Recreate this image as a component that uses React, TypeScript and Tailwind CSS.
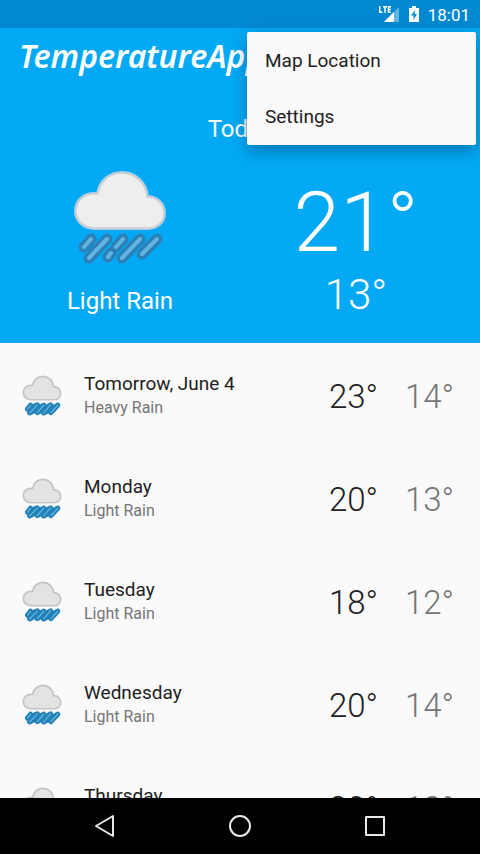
import React from "react";

type Day = { day: string; condition: string; high: number; low: number };

const days: Day[] = [
  { day: "Tomorrow, June 4", condition: "Heavy Rain", high: 23, low: 14 },
  { day: "Monday", condition: "Light Rain", high: 20, low: 13 },
  { day: "Tuesday", condition: "Light Rain", high: 18, low: 12 },
  { day: "Wednesday", condition: "Light Rain", high: 20, low: 14 },
  { day: "Thursday", condition: "Light Rain", high: 20, low: 13 },
];

const cloudPath =
  "M22 58 C10 58 3 50 3 41 C3 31 11 24 21 24 L25 24 C27 11 37 3 49 3 C62 3 73 13 74 27 C84 27 91 34 91 43 C91 52 84 58 75 58 Z";

function LargeRainIcon() {
  return (
    <svg viewBox="0 0 94 96" className="h-24 w-[94px]" fill="none" aria-hidden="true">
      <path d={cloudPath} fill="#eeeeee" stroke="#a9cde6" strokeWidth="4" />
      <path d={cloudPath} fill="#eeeeee" stroke="#cfcfd2" strokeWidth="1.5" />
      <g strokeLinecap="round">
        <path
          d="M18 69l-7 8M34 69L16 88M50 69l-7 8M38 83l-3 4M67 69L49 88M84 69L69 84"
          stroke="#2b80b8"
          strokeWidth="11"
        />
        <path
          d="M18 69l-7 8M34 69L16 88M50 69l-7 8M38 83l-3 4M67 69L49 88M84 69L69 84"
          stroke="#63b3e0"
          strokeWidth="4"
        />
      </g>
    </svg>
  );
}

function SmallRainIcon() {
  return (
    <svg viewBox="0 0 94 96" className="-mt-0.5 h-[41px] w-10 shrink-0" fill="none" aria-hidden="true">
      <path d={cloudPath} fill="#e3e3e3" stroke="#c4c4c4" strokeWidth="4" />
      <g strokeLinecap="round" strokeLinejoin="round">
        <path
          d="M20 71L13 80L36 70L18 89L51 71L36 88L67 70L51 89L84 71L68 88"
          stroke="#2481b8"
          strokeWidth="12"
        />
        <path
          d="M20 71L13 80M36 70L18 89M51 71L36 88M67 70L51 89M84 71L68 88"
          stroke="#5fb4dd"
          strokeWidth="3"
        />
      </g>
    </svg>
  );
}

function StatusBar() {
  return (
    <div className="flex h-7 shrink-0 items-center justify-end bg-[#0288d1] pr-[10px] text-white">
      <svg viewBox="0 0 22 18" className="mr-2 h-[18px] w-[22px]" aria-hidden="true">
        <path d="M21 2v15H6z" fill="#5fb3e2" />
        <path d="M16 7v10H6z" fill="#fff" />
        <path
          d="M1.8 1v6.2h2.7M5 1.7h4M7 1.7v6M13 1.7h-2.500V7.200H13M10.500 4.400h2.200"
          fill="none"
          stroke="#fff"
          strokeWidth="1.5"
        />
      </svg>
      <svg viewBox="0 0 12 18" className="mr-2 h-[18px] w-3" aria-hidden="true">
        <path d="M4 1h4v2h3v14H1V3h3z" fill="#fff" />
        <path d="M7 5l-4 5.500h2.500V15L9 9H6.500z" fill="#0288d1" />
      </svg>
      <span className="pt-px text-[17px] leading-7">18:01</span>
    </div>
  );
}

function OverflowMenu() {
  return (
    <div
      role="menu"
      className="absolute top-8 right-1 flex w-[229px] flex-col rounded-xs bg-[#fafafa] pt-px shadow-[0_6px_16px_rgba(0,40,80,0.4)]"
    >
      <button role="menuitem" className="h-14 px-[18px] text-left text-[19px] text-[#212121]">
        Map Location
      </button>
      <button role="menuitem" className="h-14 px-[18px] text-left text-[19px] text-[#212121]">
        Settings
      </button>
    </div>
  );
}

function Today() {
  return (
    <section className="flex shrink-0 flex-col bg-[#03a9f4] pb-[26px] text-white">
      <h2 className="pt-[21px] text-center text-2xl leading-8">Today</h2>
      <div className="grid grid-cols-2">
        <div className="flex flex-col items-center pt-[25px]">
          <LargeRainIcon />
          <p className="pt-[19px] text-2xl leading-8">Light Rain</p>
        </div>
        <div className="flex flex-col items-center pt-7 pr-2 font-light">
          <p className="text-[84px] leading-[100px]">21°</p>
          <p className="text-[42px] leading-[44px]">13°</p>
        </div>
      </div>
    </section>
  );
}

function DayRow({ item }: { item: Day }) {
  return (
    <li className="flex h-[103px] items-center pt-1 pr-[26px] pl-[22px]">
      <SmallRainIcon />
      <div className="-mt-0.5 ml-[22px] flex-1">
        <p className="text-[19px] leading-6 text-[#212121]">{item.day}</p>
        <p className="text-base leading-6 text-[#757575]">{item.condition}</p>
      </div>
      <p className="w-16 text-right text-[33px] leading-10 font-light text-[#212121]">{item.high}°</p>
      <p className="w-[76px] text-right text-[33px] leading-10 font-light text-[#757575]">{item.low}°</p>
    </li>
  );
}

function NavigationBar() {
  return (
    <nav className="flex h-14 shrink-0 items-center justify-center gap-[111px] bg-black text-[#e8e8e8]">
      <button aria-label="Back">
        <svg viewBox="0 0 24 24" className="size-6" fill="none" stroke="currentColor" strokeWidth="2" strokeLinejoin="round">
          <path d="M20 2v20L3 12z" />
        </svg>
      </button>
      <button aria-label="Home">
        <svg viewBox="0 0 24 24" className="size-6" fill="none" stroke="currentColor" strokeWidth="2">
          <circle cx="12" cy="12" r="10" />
        </svg>
      </button>
      <button aria-label="Recent apps">
        <svg viewBox="0 0 24 24" className="size-6" fill="none" stroke="currentColor" strokeWidth="2" strokeLinejoin="round">
          <path d="M3 3h18v18H3z" />
        </svg>
      </button>
    </nav>
  );
}

export default function App() {
  return (
    <div className="relative flex h-screen flex-col overflow-hidden bg-[#fafafa] font-['Roboto','Liberation_Sans',sans-serif]">
      <StatusBar />
      <header className="flex h-16 shrink-0 items-center bg-[#03a9f4] px-[19px] pb-2 text-white">
        <h1 className="font-['Segoe_Script','Noto_Sans',cursive] text-[32px] leading-10 font-semibold italic">
          TemperatureApp
        </h1>
      </header>
      <Today />
      <ul className="min-h-0 flex-1 overflow-hidden">
        {days.map((item) => (
          <DayRow key={item.day} item={item} />
        ))}
      </ul>
      <NavigationBar />
      <OverflowMenu />
    </div>
  );
}
